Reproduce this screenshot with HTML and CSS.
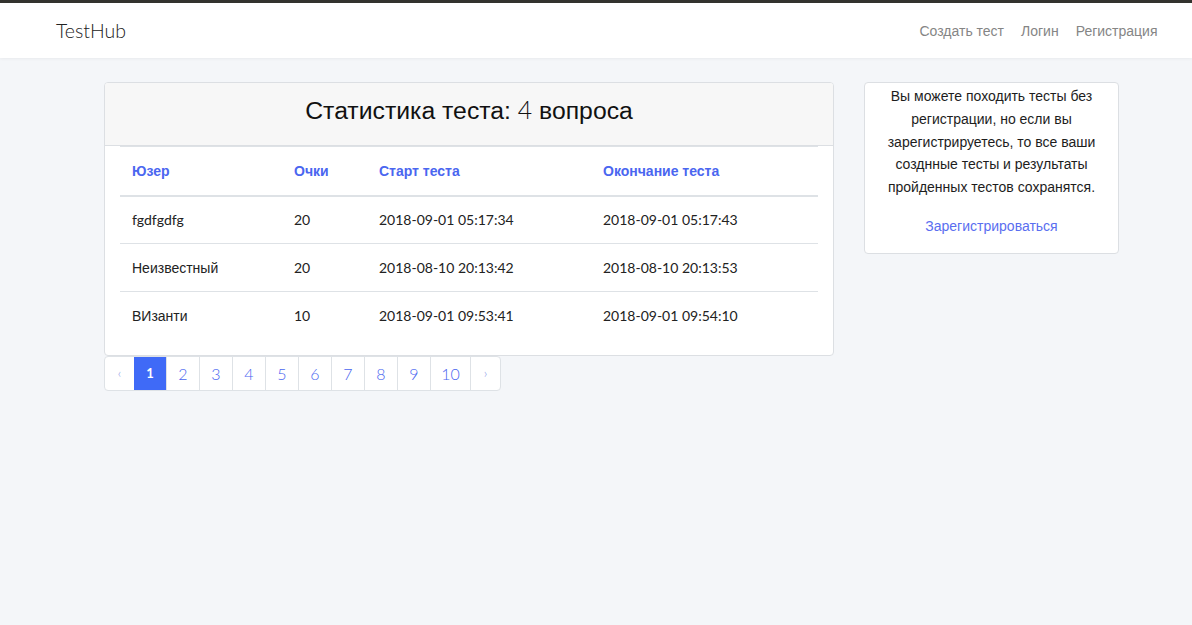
FILE: index.html
```html
<!DOCTYPE html>
<html lang="ru">
<head>
<meta charset="utf-8">
<title>TestHub</title>
<link rel="stylesheet" href="styles.css">
</head>
<body>
<header class="navbar">
  <a class="brand" href="#">TestHub</a>
  <nav class="nav">
    <a href="#">Создать тест</a>
    <a href="#">Логин</a>
    <a href="#">Регистрация</a>
  </nav>
</header>
<main class="layout">
  <section class="main-col">
    <div class="card">
      <div class="card-header">
        <h1>Статистика теста: <span class="num">4</span> вопроса</h1>
      </div>
      <div class="card-body">
        <table class="stats">
          <colgroup>
            <col class="c1"><col class="c2"><col class="c3"><col class="c4">
          </colgroup>
          <thead>
            <tr><th>Юзер</th><th>Очки</th><th>Старт теста</th><th>Окончание теста</th></tr>
          </thead>
          <tbody>
            <tr><td class="num">fgdfgdfg</td><td class="num">20</td><td class="num">2018-09-01 05:17:34</td><td class="num">2018-09-01 05:17:43</td></tr>
            <tr><td>Неизвестный</td><td class="num">20</td><td class="num">2018-08-10 20:13:42</td><td class="num">2018-08-10 20:13:53</td></tr>
            <tr><td>ВИзанти</td><td class="num">10</td><td class="num">2018-09-01 09:53:41</td><td class="num">2018-09-01 09:54:10</td></tr>
          </tbody>
        </table>
      </div>
    </div>
    <ul class="pagination">
      <li class="edge"><a href="#">&lsaquo;</a></li>
      <li class="active"><a href="#">1</a></li>
      <li><a href="#">2</a></li>
      <li><a href="#">3</a></li>
      <li><a href="#">4</a></li>
      <li><a href="#">5</a></li>
      <li><a href="#">6</a></li>
      <li><a href="#">7</a></li>
      <li><a href="#">8</a></li>
      <li><a href="#">9</a></li>
      <li class="wide"><a href="#">10</a></li>
      <li class="edge"><a href="#">&rsaquo;</a></li>
    </ul>
  </section>
  <aside class="side-card">
    <p>Вы можете походить тесты без регистрации, но если вы зарегистрируетесь, то все ваши созднные тесты и результаты пройденных тестов сохранятся.</p>
    <a class="reg-link" href="#">Зарегистрироваться</a>
  </aside>
</main>
</body>
</html>
```

FILE: styles.css
```css
* { box-sizing: border-box; }

html, body {
  margin: 0;
  padding: 0;
}

body {
  background: #f4f6f9;
  font-family: "Liberation Sans", Arial, sans-serif;
  font-size: 14px;
  color: #212529;
  border-top: 3px solid #33332e;
  min-height: 625px;
}

a { text-decoration: none; }

.num {
  font-family: Lato, "Liberation Sans", sans-serif;
}

.navbar {
  height: 55px;
  background: #fff;
  display: flex;
  align-items: center;
  justify-content: space-between;
  padding: 0 26px 0 56px;
  box-shadow: 0 1px 3px rgba(0, 0, 0, 0.05);
}

.brand {
  font-family: Lato, "Liberation Sans", sans-serif;
  font-size: 19.5px;
  font-weight: 300;
  color: #222;
}

.nav {
  display: flex;
}

.nav a {
  color: #858585;
  font-size: 14px;
  padding: 0 8.5px;
  margin-top: 1px;
}

.layout {
  display: flex;
  align-items: flex-start;
  gap: 30px;
  padding: 24px 0 0 104px;
}

.main-col {
  width: 730px;
}

.card {
  background: #fff;
  border: 1px solid #dcdfe3;
  border-radius: 4px;
  overflow: hidden;
}

.card-header {
  background: #f7f7f7;
  height: 63px;
  border-bottom: 1px solid #dcdfe3;
  display: flex;
  align-items: center;
  justify-content: center;
}

.card-header h1 {
  margin: 0;
  font-size: 24.75px;
  font-weight: 400;
  color: #111;
  padding-bottom: 8px;
}

.card-header h1 .num {
  font-weight: 300;
}

.card-body {
  padding: 0 15px 15px;
}

.stats {
  width: 698px;
  border-collapse: collapse;
  table-layout: fixed;
}

.stats col.c1 { width: 162px; }
.stats col.c2 { width: 85px; }
.stats col.c3 { width: 224px; }
.stats col.c4 { width: 227px; }

.stats th,
.stats td {
  text-align: left;
  padding: 0 12px;
  height: 48px;
  vertical-align: middle;
  border-top: 1px solid #dee2e6;
}

.stats th {
  color: #4a66f0;
  font-weight: 700;
  font-size: 14px;
  border-bottom: 2px solid #dee2e6;
  height: 49px;
}

.stats td {
  color: #222;
  font-size: 14px;
}

.stats tbody tr:first-child td {
  border-top: none;
}

.pagination {
  list-style: none;
  margin: 0;
  padding: 0;
  display: inline-flex;
  border: 1px solid #dee2e6;
  border-radius: 4px;
  background: #fff;
  height: 35px;
  overflow: hidden;
}

.pagination li {
  border-left: 1px solid #dee2e6;
}

.pagination li:first-child {
  border-left: none;
}

.pagination li a {
  display: flex;
  align-items: center;
  justify-content: center;
  height: 100%;
  width: 32px;
  color: #4a66f0;
  font-family: Lato, "Liberation Sans", sans-serif;
  font-size: 16px;
  font-weight: 300;
}

.pagination li.edge a {
  width: 29px;
  font-size: 13px;
  color: #8a97e6;
}

.pagination li.wide a {
  width: 39px;
}

.pagination li.active {
  border-left: none;
}

.pagination li.active a {
  background: #3f6af7;
  color: #fff;
  width: 32px;
  font-weight: 700;
  font-size: 13px;
}

.side-card {
  width: 255px;
  background: #fff;
  border: 1px solid #dcdfe3;
  border-radius: 4px;
  padding: 2px 18px 15px;
  text-align: center;
}

.side-card p {
  margin: 0 0 16px;
  line-height: 22.75px;
  color: #1d1d1d;
}

.reg-link {
  display: block;
  color: #5a6ef0;
  line-height: 23px;
}
```
